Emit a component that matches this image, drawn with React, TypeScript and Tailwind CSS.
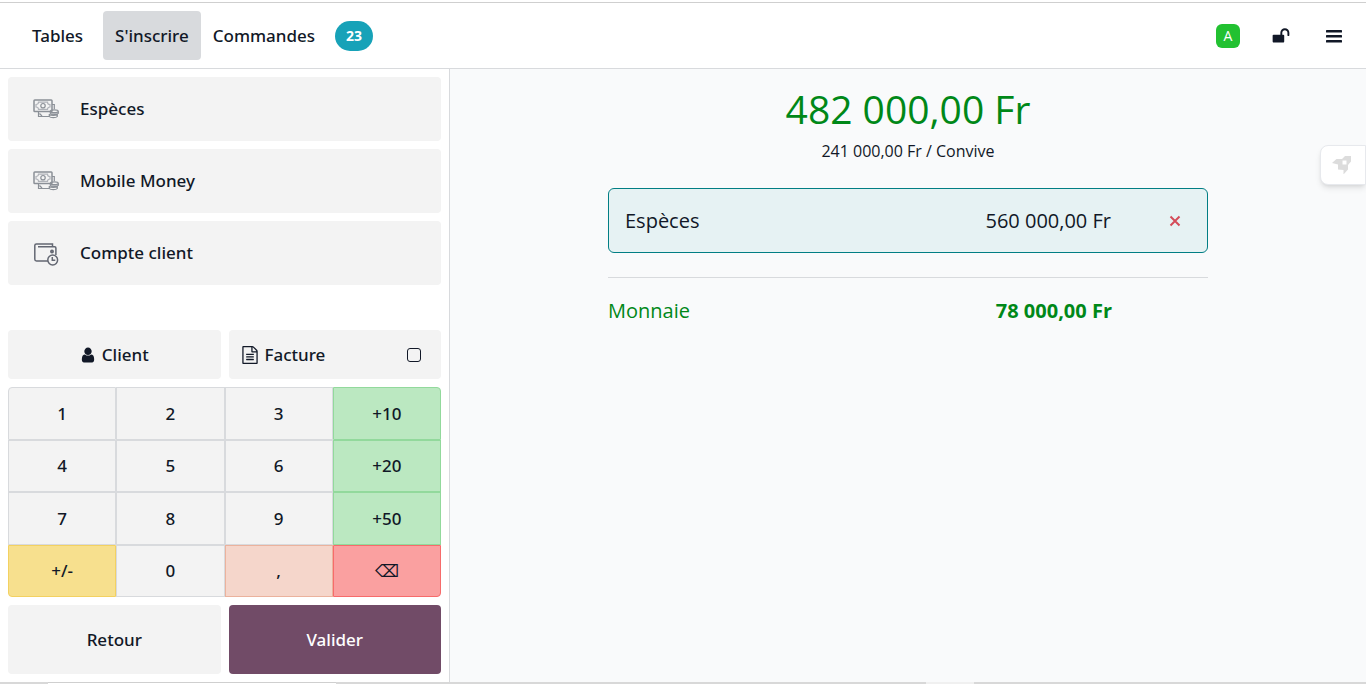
import type { ReactNode } from "react";

const INK = "text-[#111827]";

function CashIcon() {
  return (
    <svg className="h-7 w-7 shrink-0" viewBox="0 0 28 28" fill="none" stroke="#8b9097" strokeWidth="1.2" aria-hidden="true">
      <rect x="2" y="5" width="18" height="11.5" rx="0.8" strokeWidth="1.5" />
      <path d="M4 9.500c1.500 0 2.500-.8 2.500-2.300H15.500c0 1.500 1 2.300 2.500 2.300v2.500c-1.500 0-2.500.8-2.500 2.300H6.500c0-1.500-1-2.300-2.500-2.300z" stroke="#b0b3b9" />
      <circle cx="11" cy="10.700" r="2.200" />
      <path d="M20 9.500h2.300v4.500M6.500 17v4.500H17M7.500 18.500l2.500 2.500" />
      <ellipse cx="22.300" cy="16.300" rx="4" ry="1.400" />
      <path d="M18.300 16.500v1.800c1 1.200 7 1.200 8 0v-1.800M17.300 19v2.500c1 1.500 7 1.500 8 0v-2.500M17.300 19.500c1.500 1 6 1.200 8 0" />
    </svg>
  );
}

function WalletIcon() {
  return (
    <svg className="h-7 w-7 shrink-0" viewBox="0 0 28 28" fill="none" stroke="#636772" strokeWidth="1.5" aria-hidden="true">
      <path d="M17.500 22H4.500A1.700 1.700 0 0 1 2.800 20.300V6.500A1.600 1.600 0 0 1 4.400 4.900H20.500V8M6 7.800H22.700A1.200 1.200 0 0 1 23.900 9v7" />
      <circle cx="20" cy="12.500" r="1.200" fill="#8b8f98" />
      <circle cx="20.700" cy="21" r="4.900" fill="#f3f3f3" />
      <path d="M20.300 18v3.300h3" />
    </svg>
  );
}

function UserIcon() {
  return (
    <svg className="h-4 w-4" viewBox="128 64 1536 1664" fill="currentColor" aria-hidden="true">
      <path d="M1536 1399q0 109-62.500 187t-150.500 78h-854q-88 0-150.500-78t-62.500-187q0-85 8.500-160.500t31.500-152 58.500-131 94-89 134.500-34.500q131 128 313 128t313-128q76 0 134.500 34.500t94 89 58.500 131 31.500 152 8.500 160.500zm-256-887q0 159-112.500 271.500t-271.500 112.500-271.500-112.500-112.500-271.500 112.500-271.500 271.500-112.500 271.500 112.500 112.500 271.500z" />
    </svg>
  );
}

function InvoiceIcon() {
  return (
    <svg className="h-[18px] w-[18px]" viewBox="0 0 1792 1792" fill="currentColor" aria-hidden="true">
      <path d="M1596 380q28 28 48 76t20 88v1152q0 40-28 68t-68 28h-1344q-40 0-68-28t-28-68v-1600q0-40 28-68t68-28h896q40 0 88 20t76 48zm-444-244v376h376q-10-29-22-41l-313-313q-12-12-41-22zm384 1528v-1024h-416q-40 0-68-28t-28-68v-416h-768v1536h1280zm-1024-864q0-14 9-23t23-9h704q14 0 23 9t9 23v64q0 14-9 23t-23 9h-704q-14 0-23-9t-9-23v-64zm736 224q14 0 23 9t9 23v64q0 14-9 23t-23 9h-704q-14 0-23-9t-9-23v-64q0-14 9-23t23-9h704zm0 256q14 0 23 9t9 23v64q0 14-9 23t-23 9h-704q-14 0-23-9t-9-23v-64q0-14 9-23t23-9h704z" />
    </svg>
  );
}

function UnlockIcon() {
  return (
    <svg className="h-[18px] w-[18px]" viewBox="0 0 1792 1792" fill="currentColor" aria-hidden="true">
      <path d="M1728 576v256q0 26-19 45t-45 19h-64q-26 0-45-19t-19-45v-256q0-106-75-181t-181-75-181 75-75 181v192h96q40 0 68 28t28 68v576q0 40-28 68t-68 28h-960q-40 0-68-28t-28-68v-576q0-40 28-68t68-28h672v-192q0-185 131.500-316.500t316.500-131.500 316.500 131.500 131.500 316.500z" />
    </svg>
  );
}

function MenuIcon() {
  return (
    <svg className="h-4 w-4" viewBox="0 0 16 16" fill="currentColor" aria-hidden="true">
      <rect y="2" width="16" height="2.600" rx="0.600" />
      <rect y="7" width="16" height="2.600" rx="0.600" />
      <rect y="12" width="16" height="2.600" rx="0.600" />
    </svg>
  );
}

function RocketIcon() {
  return (
    <svg className="h-[18px] w-[19px]" viewBox="0 0 19 18" fill="#dcdcdc" aria-hidden="true">
      <path fillRule="evenodd" d="M0 7 4.500 3H10L13 0H19V5.500L16 9V13.500L11.500 18.500V14L6 13.500V8.500zM10.500 4.500V8.500H14.500V4.500z" />
    </svg>
  );
}

const methods: { name: string; icon: ReactNode }[] = [
  { name: "Espèces", icon: <CashIcon /> },
  { name: "Mobile Money", icon: <CashIcon /> },
  { name: "Compte client", icon: <WalletIcon /> },
];

const plain = "border-[#d8dadd] bg-[#f3f3f3]";
const green = "border-[#92d99c] bg-[#bbe8c1]";
const keys: { label: string; style: string }[] = [
  { label: "1", style: `${plain} rounded-tl` },
  { label: "2", style: plain },
  { label: "3", style: plain },
  { label: "+10", style: `${green} rounded-tr` },
  { label: "4", style: plain },
  { label: "5", style: plain },
  { label: "6", style: plain },
  { label: "+20", style: green },
  { label: "7", style: plain },
  { label: "8", style: plain },
  { label: "9", style: plain },
  { label: "+50", style: green },
  { label: "+/-", style: "rounded-bl border-[#f3d161] bg-[#f7e08e]" },
  { label: "0", style: plain },
  { label: ",", style: "border-[#ebb29d] bg-[#f5d6cb]" },
  { label: "⌫", style: "rounded-br border-[#f76b6b] bg-[#faa0a0]" },
];

function Header() {
  return (
    <header className="flex h-[67px] items-center justify-between border-y border-t-[#cfcfcf] border-b-[#d8dadd] bg-white pr-4 pl-5">
      <nav className="flex items-center font-['Noto_Sans','Open_Sans',sans-serif] text-[17px] font-medium">
        <button className="h-[49px] rounded px-3">Tables</button>
        <button className="ml-2 h-[49px] rounded bg-[#d8dadd] px-3">S'inscrire</button>
        <button className="flex h-[49px] items-center gap-5 rounded px-3">
          Commandes
          <span className="rounded-full bg-[#17a2b8] px-[11px] py-1 text-sm leading-[22px] font-bold text-white">23</span>
        </button>
      </nav>
      <div className="flex items-center">
        <span className="flex h-6 w-6 items-center justify-center rounded-md bg-[#22c131] text-sm text-white">A</span>
        <button aria-label="Verrouiller" className="ml-6 p-2"><UnlockIcon /></button>
        <button aria-label="Menu" className="ml-5 p-2"><MenuIcon /></button>
      </div>
    </header>
  );
}

function PaymentPanel() {
  return (
    <aside className="flex w-[450px] shrink-0 flex-col gap-2 border-r border-[#d8dadd] bg-white p-2 font-['Noto_Sans','Open_Sans',sans-serif] text-[17px] font-medium">
      <div className="flex flex-1 flex-col gap-2">
        {methods.map((m) => (
          <button key={m.name} className="flex h-16 items-center gap-5 rounded bg-[#f3f3f3] px-6 text-left">
            {m.icon}
            {m.name}
          </button>
        ))}
      </div>
      <div className="grid grid-cols-2 gap-2">
        <button className="flex h-[49px] items-center justify-center gap-1.5 rounded bg-[#f3f3f3]">
          <UserIcon />
          Client
        </button>
        <label className="flex h-[49px] items-center gap-1.5 rounded bg-[#f3f3f3] pr-5 pl-3">
          <InvoiceIcon />
          Facture
          <input type="checkbox" className="ml-auto h-3.5 w-3.5 appearance-none rounded-[3px] border border-[#111827] checked:bg-[#111827]" />
        </label>
      </div>
      <div className="grid h-[210px] grid-cols-4 grid-rows-4">
        {keys.map((k) => (
          <button key={k.label} className={`border ${k.style}`}>{k.label}</button>
        ))}
      </div>
      <div className="grid grid-cols-2 gap-2">
        <button className="h-[69px] rounded bg-[#f3f3f3]">Retour</button>
        <button className="h-[69px] rounded bg-[#714b67] text-white">Valider</button>
      </div>
    </aside>
  );
}

function Summary() {
  return (
    <main className="relative flex flex-1 justify-center bg-[#f9fafb] px-4">
      <div className="flex w-full max-w-[600px] flex-col">
        <h1 className="mt-4 text-center text-[39px] leading-[48px] text-[#008818]">482 000,00 Fr</h1>
        <p className="mt-1.5 text-center text-base">241 000,00 Fr / Convive</p>
        <div className="mt-[25px] flex h-[65px] items-center rounded-md border border-[#017e84] bg-[#e6f2f3] px-4 text-xl">
          <span className="flex-1">Espèces</span>
          <span>560 000,00 Fr</span>
          <button aria-label="Supprimer" className="ml-12 flex w-8 justify-center text-[#d44c59]">
            <svg className="h-3 w-3" viewBox="0 0 12 12" stroke="currentColor" strokeWidth="2" aria-hidden="true">
              <path d="M1.500 1.500l9 9M10.500 1.500l-9 9" />
            </svg>
          </button>
        </div>
        <div className="mt-6 flex items-center justify-between border-t border-[#d8dadd] pt-[18px] pr-24 text-xl leading-[30px] text-[#008818]">
          <span>Monnaie</span>
          <span className="font-bold">78 000,00 Fr</span>
        </div>
      </div>
      <button aria-label="Assistant" className="absolute top-[76px] right-0 flex h-10 w-[46px] items-center rounded-l-lg border border-[#e7e9ed] bg-white pl-[11px] shadow-md">
        <RocketIcon />
      </button>
    </main>
  );
}

export default function App() {
  return (
    <div className={`flex min-h-screen flex-col bg-white pt-0.5 font-['Open_Sans','Noto_Sans',sans-serif] ${INK}`}>
      <Header />
      <div className="flex flex-1">
        <PaymentPanel />
        <Summary />
      </div>
      <div className="flex h-0.5 bg-[#d8d8d8]">
        <div className="ml-12 w-72 border-t border-[#cfcfcf] bg-white" />
        <div className="ml-[590px] w-12 bg-[#f0f0f0]" />
      </div>
    </div>
  );
}
